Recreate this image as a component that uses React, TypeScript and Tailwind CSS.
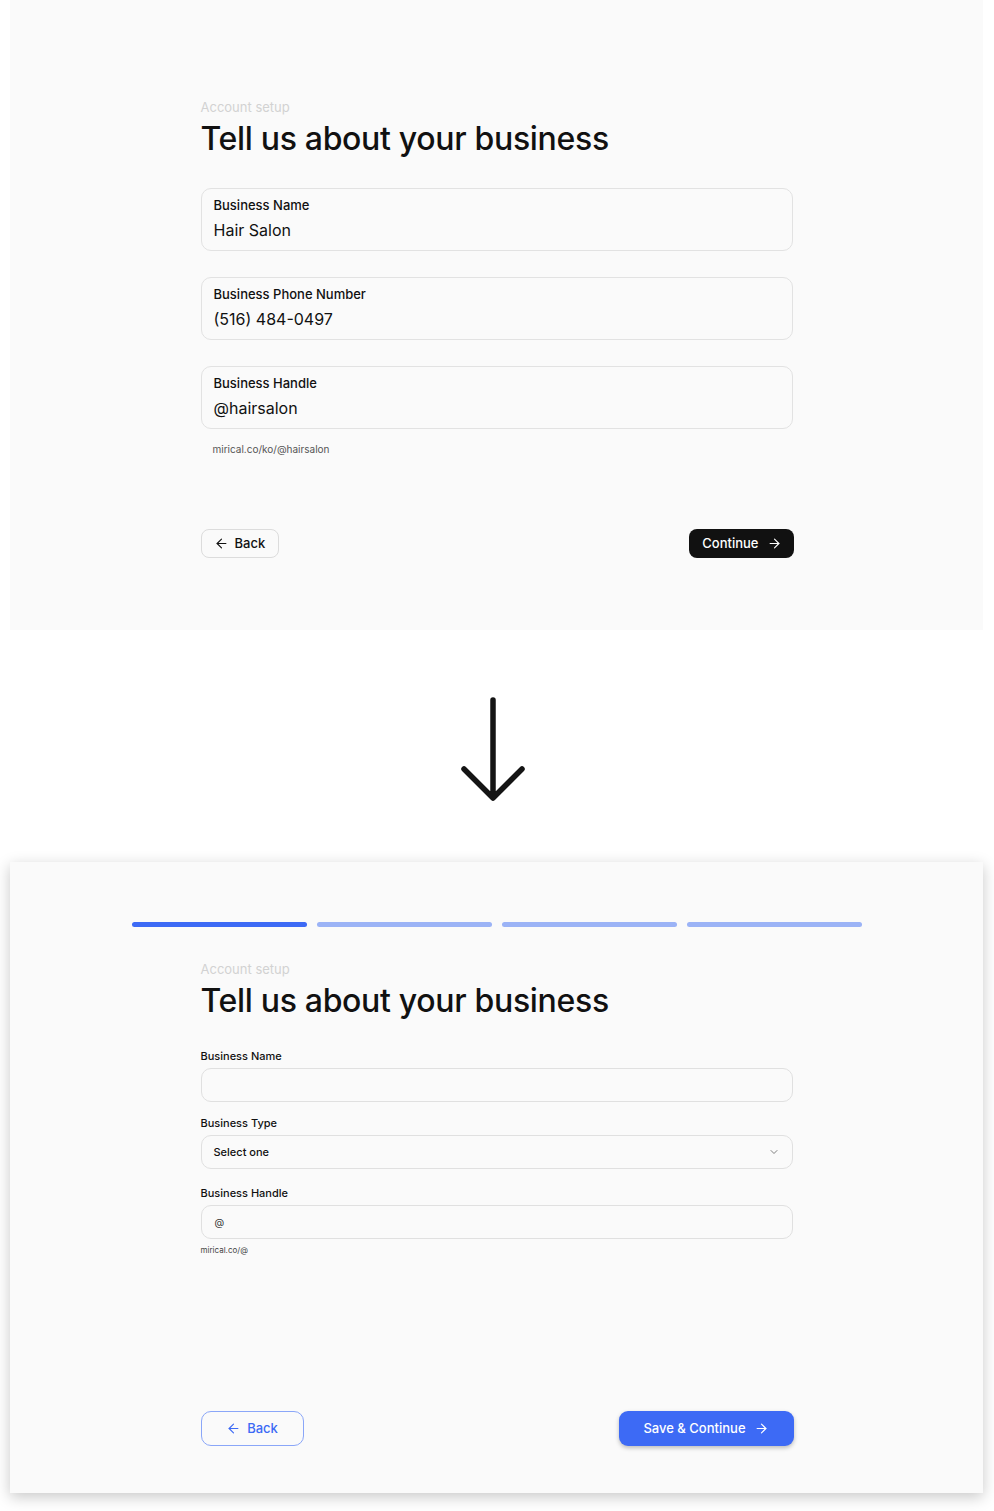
import { ArrowLeft, ArrowRight, ChevronDown } from "lucide-react";

const font = { fontFamily: "Inter, 'Noto Sans', sans-serif" };

interface FilledFieldProps {
    label: string;
    value: string;
}

const FilledField: React.FC<FilledFieldProps> = ({ label, value }) => {
    return (
        <div className="h-[63px] rounded-[10px] border border-[#e2e2e2] px-3 pt-[8px]">
            <div className="text-[13px] font-medium leading-4 text-[#111]">{label}</div>
            <div className="mt-[7px] text-[16px] leading-5 text-[#111]">{value}</div>
        </div>
    );
};

const Heading = () => (
    <>
        <div className="text-[13px] leading-4 text-[#d2d2d2]">Account setup</div>
        <h1 className="mt-1 text-[32px] font-medium leading-10 tracking-[-0.01em] text-[#111]">
            Tell us about your business
        </h1>
    </>
);

const TopPanel = () => (
    <div className="flex h-[630px] flex-col bg-[#fafafa] pt-[99px]">
        <div className="mx-auto w-[592px]">
            <Heading />
            <div className="mt-[29px] flex flex-col gap-[26px]">
                <FilledField label="Business Name" value="Hair Salon" />
                <FilledField label="Business Phone Number" value="(516) 484-0497" />
            </div>
            <div className="mt-[26px]">
                <FilledField label="Business Handle" value="@hairsalon" />
            </div>
            <div className="mt-[14px] pl-3 text-[10px] leading-3 text-[#555]">mirical.co/ko/@hairsalon</div>
            <div className="mt-[74px] flex items-center justify-between">
                <button className="flex h-[29px] items-center gap-[6px] rounded-[8px] border border-[#dcdcdc] bg-[#fafafa] pl-3 pr-[13px] text-[13px] font-medium text-[#111]">
                    <ArrowLeft className="h-[15px] w-[15px]" strokeWidth={1.8} />
                    Back
                </button>
                <button className="mr-[-1px] flex h-[29px] items-center gap-[8px] rounded-[8px] bg-[#111] pl-[13px] pr-[12px] text-[13px] font-medium text-white">
                    Continue
                    <ArrowRight className="h-[15px] w-[15px]" strokeWidth={1.8} />
                </button>
            </div>
        </div>
    </div>
);

const DownArrow = () => (
    <div className="flex h-[232px] items-center justify-center">
        <svg width="70" height="110" viewBox="0 0 70 110" className="ml-[-8px] mt-[10px]">
            <path
                d="M35 4 V101 M6 73 L35 102 L64 73"
                fill="none"
                stroke="#141414"
                strokeWidth="5.5"
                strokeLinecap="round"
                strokeLinejoin="round"
            />
        </svg>
    </div>
);

const Label = ({ children }: { children: React.ReactNode }) => (
    <div className="text-[11px] font-medium leading-[14px] text-[#111]">{children}</div>
);

const BottomPanel = () => (
    <div className="flex h-[631px] flex-col bg-[#fafafa] pb-[47px] pt-[60px] shadow-[0_4px_14px_rgba(0,0,0,0.22)]">
        <div className="mx-auto flex w-[730px] gap-[10px]">
            <div className="h-[5px] flex-1 rounded-full bg-[#3d6af5]" />
            <div className="h-[5px] flex-1 rounded-full bg-[#9bb3f6]" />
            <div className="h-[5px] flex-1 rounded-full bg-[#9bb3f6]" />
            <div className="h-[5px] flex-1 rounded-full bg-[#9bb3f6]" />
        </div>
        <div className="mx-auto mt-[34px] flex w-[592px] flex-1 flex-col">
            <Heading />
            <div className="mt-[28px]">
                <Label>Business Name</Label>
                <div className="mt-[5px] h-[34px] rounded-[10px] border border-[#e0e0e0]" />
            </div>
            <div className="mt-[14px]">
                <Label>Business Type</Label>
                <div className="mt-[5px] flex h-[34px] items-center justify-between rounded-[10px] border border-[#e0e0e0] pl-[12px] pr-[12px]">
                    <span className="text-[11px] font-medium text-[#111]">Select one</span>
                    <ChevronDown className="h-3 w-3 text-[#555]" strokeWidth={1.5} />
                </div>
            </div>
            <div className="mt-[17px]">
                <Label>Business Handle</Label>
                <div className="mt-[5px] flex h-[34px] items-center rounded-[10px] border border-[#e0e0e0] pl-[13px]">
                    <span className="text-[10px] text-[#333]">@</span>
                </div>
                <div className="mt-[6px] text-[8px] leading-[10px] text-[#444]">mirical.co/@</div>
            </div>
            <div className="mt-auto flex items-center justify-between">
                <button className="flex h-[35px] w-[103px] items-center justify-center gap-[6px] rounded-[10px] border border-[#8aa6f8] bg-[#fafafa] text-[13px] font-medium text-[#3d6af5]">
                    <ArrowLeft className="h-[15px] w-[15px]" strokeWidth={1.8} />
                    Back
                </button>
                <button className="mr-[-1px] flex h-[35px] w-[175px] items-center justify-center gap-[8px] rounded-[9px] bg-[#3d6af5] text-[13px] font-medium text-white shadow-[0_2px_4px_rgba(0,0,0,0.25)]">
                    Save &amp; Continue
                    <ArrowRight className="h-[15px] w-[15px]" strokeWidth={1.8} />
                </button>
            </div>
        </div>
    </div>
);

export default function App() {
    return (
        <div className="min-h-[1511px] bg-white px-[10px] pb-[18px]" style={font}>
            <div className="w-[973px]">
                <TopPanel />
                <DownArrow />
                <BottomPanel />
            </div>
        </div>
    );
}
